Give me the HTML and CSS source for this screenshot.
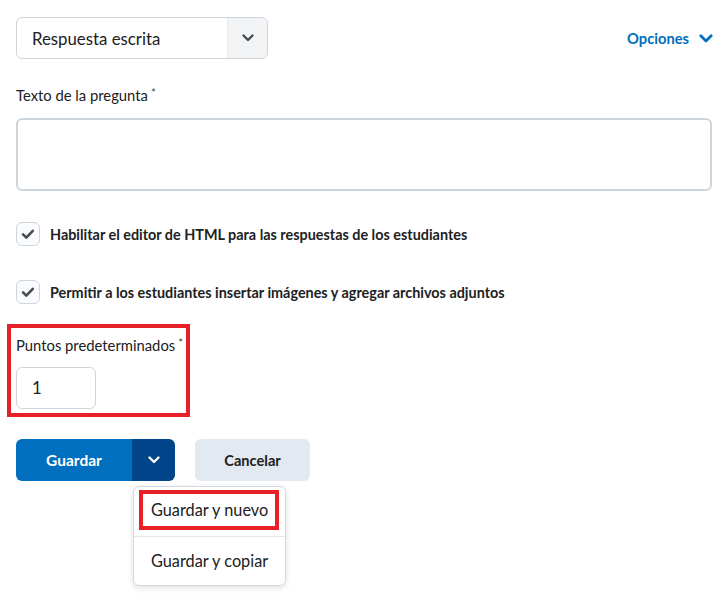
FILE: index.html
```html
<!DOCTYPE html>
<html lang="es">
<head>
<meta charset="utf-8">
<title>Pregunta</title>
<link rel="stylesheet" href="styles.css">
</head>
<body>
<div class="page">
  <div class="top-row">
    <div class="select">
      <span class="select-text">Respuesta escrita</span>
      <span class="select-btn">
        <svg width="12" height="8" viewBox="0 0 12 8"><polyline points="1.5,1.5 6,6 10.5,1.5" fill="none" stroke="#494c4e" stroke-width="2.4" stroke-linecap="round" stroke-linejoin="round"/></svg>
      </span>
    </div>
    <a class="options">Opciones
      <svg width="14" height="9" viewBox="0 0 14 9"><polyline points="1.8,1.8 7,7 12.2,1.8" fill="none" stroke="#006fbf" stroke-width="2.8" stroke-linecap="round" stroke-linejoin="round"/></svg>
    </a>
  </div>

  <div class="label label-q">Texto de la pregunta<span class="req">*</span></div>
  <div class="textarea"></div>

  <div class="check-row first">
    <span class="checkbox"><svg width="24" height="24" viewBox="0 0 24 24"><polyline points="7,12.3 10.3,15.6 16.8,8.8" fill="none" stroke="#494c4e" stroke-width="2.6" stroke-linecap="round" stroke-linejoin="round"/></svg></span>
    <span class="check-label">Habilitar el editor de HTML para las respuestas de los estudiantes</span>
  </div>
  <div class="check-row second">
    <span class="checkbox"><svg width="24" height="24" viewBox="0 0 24 24"><polyline points="7,12.3 10.3,15.6 16.8,8.8" fill="none" stroke="#494c4e" stroke-width="2.6" stroke-linecap="round" stroke-linejoin="round"/></svg></span>
    <span class="check-label">Permitir a los estudiantes insertar imágenes y agregar archivos adjuntos</span>
  </div>

  <div class="points">
    <div class="label">Puntos predeterminados<span class="req">*</span></div>
    <div class="num-input">1</div>
  </div>

  <div class="actions">
    <div class="split">
      <button class="btn-primary">Guardar</button>
      <button class="btn-split">
        <svg width="12" height="8" viewBox="0 0 12 8"><polyline points="1.5,1.5 6,6 10.5,1.5" fill="none" stroke="#ffffff" stroke-width="2.4" stroke-linecap="round" stroke-linejoin="round"/></svg>
      </button>
      <div class="menu">
        <div class="menu-item first"><span class="hl">Guardar y nuevo</span></div>
        <div class="menu-item second">Guardar y copiar</div>
      </div>
    </div>
    <button class="btn-secondary">Cancelar</button>
  </div>
</div>
</body>
</html>
```

FILE: styles.css
```css
* { box-sizing: border-box; }
html, body { margin: 0; padding: 0; background: #ffffff; }
body {
  font-family: Lato, "Noto Sans", "Liberation Sans", sans-serif;
  color: #202122;
  min-height: 611px;
}
.page {
  padding: 17px 16px 0 16px;
  width: 728px;
  min-height: 611px;
}
.top-row {
  display: flex;
  align-items: center;
  justify-content: space-between;
}
.select {
  display: flex;
  width: 252px;
  height: 42px;
  border: 1px solid #cdd5dc;
  border-radius: 6px;
  overflow: hidden;
}
.select-text {
  flex: 1;
  display: flex;
  align-items: center;
  padding-left: 15px;
  font-size: 16.8px;
  color: #202122;
}
.select-btn {
  width: 40px;
  display: flex;
  align-items: center;
  justify-content: center;
  background: #f1f3f5;
  border-left: 1px solid #e3e9f1;
}
.options {
  display: flex;
  align-items: center;
  gap: 10px;
  font-size: 14.7px;
  font-weight: 700;
  color: #006fbf;
  margin-right: -1px;
}
.label {
  font-size: 14.8px;
  line-height: 20px;
  color: #202122;
}
.req {
  font-size: 11.5px;
  line-height: 0;
  margin-left: 3px;
  vertical-align: 4px;
  color: #494c4e;
}
.label-q { margin-top: 26px; }
.textarea {
  margin-top: 13px;
  height: 73px;
  border: 2px solid #cdd5dc;
  border-radius: 6px;
}
.check-row {
  display: flex;
  align-items: center;
  gap: 10px;
  height: 24px;
}
.check-row.first { margin-top: 31px; }
.check-row.second { margin-top: 34px; }
.checkbox {
  width: 24px;
  height: 24px;
  border: 1px solid #cdd5dc;
  border-radius: 6px;
  background: #f9fbff;
  display: flex;
  align-items: center;
  justify-content: center;
}
.checkbox svg { display: block; margin: -1px; }
.check-label {
  font-size: 14.4px;
  font-weight: 700;
  color: #202122;
}
.points {
  margin-top: 20px;
  margin-left: -9px;
  width: 183px;
  border: 4px solid #e8202a;
  padding: 7px 0 4px 5px;
}
.num-input {
  margin-top: 12px;
  width: 80px;
  height: 42px;
  border: 1px solid #cdd5dc;
  border-radius: 6px;
  font-size: 16.8px;
  line-height: 40px;
  padding-left: 15px;
  color: #202122;
}
.actions {
  margin-top: 22px;
  display: flex;
  gap: 20px;
}
.split {
  position: relative;
  display: flex;
}
button {
  font-family: Lato, "Noto Sans", "Liberation Sans", sans-serif;
  font-size: 14.6px;
  font-weight: 700;
  border: none;
  height: 42px;
  cursor: pointer;
}
.btn-primary {
  width: 116px;
  background: #006fbf;
  color: #ffffff;
  border-radius: 6px 0 0 6px;
  font-size: 15.5px;
}
.btn-split {
  width: 43px;
  background: #004489;
  border-radius: 0 6px 6px 0;
  display: flex;
  align-items: center;
  justify-content: center;
}
.btn-secondary {
  width: 115px;
  background: #e3e9f1;
  color: #202122;
  border-radius: 6px;
}
.menu {
  position: absolute;
  left: 117px;
  top: 47px;
  width: 153px;
  background: #ffffff;
  border: 1px solid #d3d9e3;
  border-radius: 6px;
  box-shadow: 0 2px 6px rgba(0, 0, 0, 0.12);
  font-size: 16.3px;
  z-index: 10;
}
.menu-item.first {
  padding: 3px 6px 6px 5px;
  border-bottom: 1px solid #e3e9f1;
}
.hl {
  display: block;
  border: 4px solid #e8202a;
  padding: 6px 0 6px 8px;
  line-height: 20px;
  color: #202122;
  white-space: nowrap;
}
.menu-item.second {
  height: 48px;
  line-height: 48px;
  padding-left: 17px;
  color: #202122;
  white-space: nowrap;
}
```
